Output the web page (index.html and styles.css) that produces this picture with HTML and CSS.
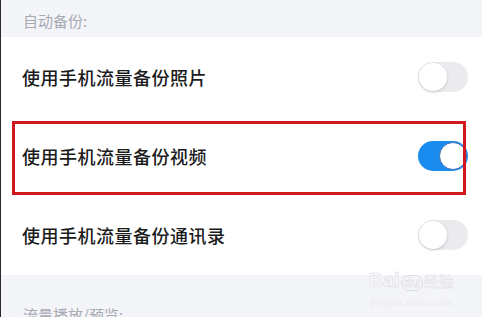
FILE: index.html
```html
<!DOCTYPE html>
<html lang="zh-CN">
<head>
    <meta charset="UTF-8">
    <meta name="viewport" content="width=device-width, initial-scale=1.0">
    <title>自动备份</title>
    <link rel="stylesheet" href="styles.css">
</head>
<body>
    <div class="page">
        <div class="section-title top">自动备份:</div>

        <div class="group">
            <div class="row">
                <span class="label">使用手机流量备份照片</span>
                <span class="switch"><span class="knob"></span></span>
            </div>
            <div class="row marked">
                <span class="label">使用手机流量备份视频</span>
                <span class="switch on"><span class="knob"></span></span>
            </div>
            <div class="row">
                <span class="label">使用手机流量备份通讯录</span>
                <span class="switch"><span class="knob"></span></span>
            </div>
        </div>

        <div class="section-title bottom">流量播放/预览:</div>

        <!-- 水印 -->
        <div class="watermark">
            <div class="wm-logo">Bai<span class="wm-du">du</span><span class="wm-jy">经验</span></div>
            <div class="wm-url">jingyan.baidu.com</div>
        </div>
    </div>
</body>
</html>
```

FILE: styles.css
```css
body {
    margin: 0;
    font-family: 'Noto Sans CJK SC', 'Noto Sans', sans-serif;
    background: #f4f5f9;
    overflow: hidden;
}

.page {
    position: relative;
    width: 481px;
    height: 317px;
    border-left: 1px solid #2a2a2a;
    background: #f4f5f9;
    overflow: hidden;
}

.section-title {
    font-size: 15px;
    color: #a8aab2;
    padding-left: 22px;
    box-sizing: border-box;
}

.section-title.top {
    height: 37px;
    line-height: 15px;
    padding-top: 13px;
}

.section-title.bottom {
    height: 42px;
    padding-top: 30px;
    line-height: 20px;
}

.group {
    background: #ffffff;
}

.row {
    height: 79px;
    display: flex;
    align-items: center;
    justify-content: space-between;
    padding: 0 14px 0 21px;
    box-sizing: border-box;
}

.row:last-child {
    height: 80px;
}

.label {
    font-size: 18px;
    font-weight: 500;
    color: #1b1b1b;
    letter-spacing: 0.5px;
}

/* 红框标注 */
.marked {
    position: relative;
}

.marked::after {
    content: "";
    position: absolute;
    left: 11px;
    top: 5px;
    width: 448px;
    height: 68px;
    border: 3px solid #d0181e;
}

.switch {
    width: 50px;
    height: 30px;
    border-radius: 15px;
    background: #ebebef;
    display: flex;
    align-items: center;
    padding: 1px;
    box-sizing: border-box;
}

.knob {
    width: 28px;
    height: 28px;
    border-radius: 50%;
    background: #fff;
    box-shadow: 0 1px 3px rgba(0, 0, 0, 0.18);
}

.switch.on {
    background: #1a8cf0;
    justify-content: flex-end;
}

.switch.on .knob {
    box-shadow: none;
    border: 1px solid #3b6fb8;
    box-sizing: border-box;
}

.watermark {
    position: absolute;
    left: 364px;
    top: 268px;
    width: 92px;
    text-align: center;
    color: #f8f8fb;
    -webkit-text-stroke: 0.5px #d8d8e0;
}

.wm-logo {
    font-family: 'Liberation Sans', sans-serif;
    font-size: 20px;
    font-weight: bold;
    line-height: 24px;
    white-space: nowrap;
}

.wm-du {
    display: inline-block;
    font-size: 13px;
    margin: 0 1px;
    border: 1px solid #dcdce4;
    border-radius: 8px;
    padding: 0 2px;
    line-height: 14px;
}

.wm-jy {
    font-family: 'Noto Sans CJK SC', sans-serif;
    font-size: 15px;
    font-weight: normal;
    color: #f4f4f8;
    -webkit-text-stroke: 0.3px #dadae2;
}

.wm-url {
    font-family: 'Liberation Serif', serif;
    font-size: 11px;
    line-height: 12px;
    margin-top: 3px;
    color: #eaeaf0;
    -webkit-text-stroke: 0;
}
```
